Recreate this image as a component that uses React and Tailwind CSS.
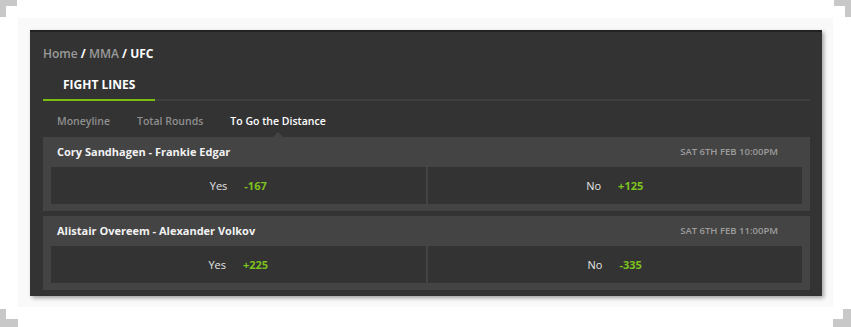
import { Fragment } from 'react'

const fights = [
  { id: 1, name: 'Cory Sandhagen - Frankie Edgar', date: 'SAT 6TH FEB 10:00PM', yes: '-167', no: '+125' },
  { id: 2, name: 'Alistair Overeem - Alexander Volkov', date: 'SAT 6TH FEB 11:00PM', yes: '+225', no: '-335' },
]

function OddsButton({ label, price }) {
  return (
    <button className="h-full bg-[#333333] flex items-center justify-center gap-[17px] text-[11px] leading-4">
      <span className="text-[#e4e4e4]">{label}</span>
      <span className="text-[#7dc21e] font-bold">{price}</span>
    </button>
  )
}

function FightCard({ fight }) {
  return (
    <div className="bg-[#444444] pb-[7px]">
      {/* Header */}
      <div className="h-[30px] flex items-center justify-between pl-[14px] pr-[32px]">
        <span className="text-[11px] font-bold text-[#f2f2f2]">{fight.name}</span>
        <span className="text-[9.5px] font-semibold text-[#9d9d9d]">{fight.date}</span>
      </div>
      {/* Odds */}
      <div className="grid grid-cols-2 gap-[2px] px-2 h-[37px]">
        <OddsButton label="Yes" price={fight.yes} />
        <OddsButton label="No" price={fight.no} />
      </div>
    </div>
  )
}

export default function App() {
  const subTabs = ['Moneyline', 'Total Rounds', 'To Go the Distance']

  return (
    <div className="relative w-[851px] h-[327px] bg-white p-[18px] font-['Open_Sans',sans-serif]">
      {/* Corner brackets */}
      <div className="absolute top-0 left-0 w-[17px] h-[6px] bg-[#c8c8c8]" />
      <div className="absolute top-0 left-0 w-[6px] h-[17px] bg-[#c8c8c8]" />
      <div className="absolute top-0 right-0 w-[17px] h-[6px] bg-[#c8c8c8]" />
      <div className="absolute top-0 right-0 w-[6px] h-[17px] bg-[#c8c8c8]" />
      <div className="absolute bottom-0 left-0 w-[18px] h-[8px] bg-[#c8c8c8]" />
      <div className="absolute bottom-0 left-0 w-[6px] h-[18px] bg-[#c8c8c8]" />
      <div className="absolute bottom-0 right-0 w-[18px] h-[8px] bg-[#c8c8c8]" />
      <div className="absolute bottom-0 right-0 w-[8px] h-[18px] bg-[#c8c8c8]" />

      <div className="w-[815px] h-[289px] bg-[#f9f9f9] pt-[12px] pl-[12px]">
        <div className="w-[792px] h-[266px] bg-[#333333] border-t-2 border-[#222222] shadow-[2px_2px_4px_rgba(0,0,0,0.35)] pl-[13px] pr-[12px]">
          {/* Breadcrumb */}
          <div className="pt-[13px] text-[12px] leading-[17px] font-semibold text-[#9a9a9a]">
            Home <span className="text-white font-bold">/</span> MMA <span className="text-white font-bold">/</span> <span className="text-white font-bold">UFC</span>
          </div>

          {/* Main tab */}
          <div className="flex border-b-2 border-[#3e3e3e]">
            <div className="-mb-[2px] border-b-2 border-[#7cbd10] px-[20px] pt-[15px] pb-[6px] text-[12px] leading-4 font-bold text-white">
              FIGHT LINES
            </div>
          </div>

          {/* Sub tabs */}
          <div className="flex pl-[14px] gap-[27px] h-[36px] items-end">
            {subTabs.map((tab, i) => (
              <div key={tab} className={`relative pb-[8px] text-[10.5px] leading-4 font-semibold ${i === 2 ? 'text-white' : 'text-[#8f8f8f]'}`}>
                {tab}
                {i === 2 && (
                  <span className="absolute bottom-0 left-1/2 -translate-x-1/2 w-0 h-0 border-l-[5px] border-r-[5px] border-b-[5px] border-l-transparent border-r-transparent border-b-[#444444]" />
                )}
              </div>
            ))}
          </div>

          {/* Fights */}
          <div className="flex flex-col gap-[5px]">
            {fights.map(f => (
              <FightCard key={f.id} fight={f} />
            ))}
          </div>
        </div>
      </div>
    </div>
  )
}
